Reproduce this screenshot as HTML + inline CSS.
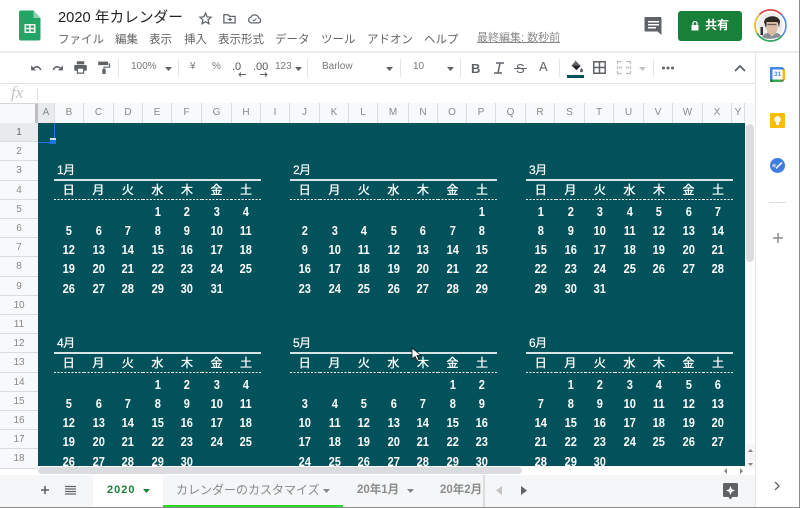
<!DOCTYPE html>
<html lang="ja"><head><meta charset="utf-8"><title>2020 年カレンダー</title>
<style>
html,body{margin:0;padding:0;background:#fff}
#p{position:relative;width:800px;height:508px;overflow:hidden;background:#fff;font-family:"Liberation Sans","Noto Sans CJK JP",sans-serif;color:#5f6368}
.a{position:absolute;white-space:nowrap}
svg{position:absolute;overflow:visible}
.m{top:32px;font-size:11.5px;color:#666;line-height:16px}
.t{top:60px;font-size:10px;color:#777;line-height:14px}
.ch{position:absolute;top:103px;height:20px;line-height:20px;font-size:10px;text-align:center;color:#888;background:#f8f9fa;border-right:1px solid #dadce0;box-sizing:border-box;overflow:hidden}
.rh{position:absolute;left:0;width:38px;text-align:center;font-size:10px;color:#888;background:#f8f9fa;border-bottom:1px solid #dadce0;box-sizing:border-box;line-height:19px;height:19.2px}
.v{position:absolute;width:1px;background:#e3e3e3;height:18px;top:59px}
#g{position:absolute;left:38px;top:123px;width:707px;height:343px;background:#02525c;overflow:hidden}
.c{position:absolute;width:207px;display:grid;grid-template-columns:repeat(7,29.55px);grid-auto-rows:19.2px;color:#fff;font-family:"Liberation Sans","Noto Sans CJK JP",sans-serif;font-weight:700;font-size:13px;text-align:center;line-height:19px}
.c b{font-family:"Liberation Sans","Noto Sans CJK JP",sans-serif;font-size:12px;grid-column:span 7;text-align:left;padding-left:3px;line-height:18px;font-weight:400;letter-spacing:-.5px;-webkit-text-stroke:.2px #fff}
.c u{text-decoration:none;font-size:12px;font-weight:400;line-height:18px;border-top:2px solid #d5e3e5;box-sizing:border-box;margin-top:-1px;height:21px;-webkit-text-stroke:.3px #fff;background:repeating-linear-gradient(90deg,#fff 0 2px,transparent 2px 3.5px) bottom/100% 1.5px no-repeat}
.c i{font-style:normal;display:block;position:relative;top:2.5px;transform:scaleX(.85)}
.tab{position:absolute;top:475px;height:32px;line-height:31px;font-size:12px;color:#888;white-space:nowrap}
</style></head><body><div id="p">

<!-- title bar -->
<svg style="left:19px;top:10px" width="22" height="31" viewBox="0 0 22 31"><path d="M2 .5h12.500L21.500 8v20.500a2 2 0 0 1-2 2H2a2 2 0 0 1-2-2v-26a2 2 0 0 1 2-2z" fill="#23a566"/><path d="M14.500.5 21.500 8h-7z" fill="#8ed1b1"/><path d="M5.500 14h11v9h-11zM7 15.500v2.200h3.200v-2.200zm4.800 0v2.200H15v-2.200zM7 19.300v2.200h3.200v-2.200zm4.800 0v2.200H15v-2.200z" fill="#f1f8f4" fill-rule="evenodd"/></svg>
<div class="a" style="left:58px;top:8px;font-size:14.700px;line-height:20px;color:#222">2020 年カレンダー</div>
<svg style="left:198px;top:11px" width="15" height="15" viewBox="0 0 24 24"><path d="M12 3.500l2.600 5.800 6.300.6-4.800 4.200 1.400 6.200L12 17.100l-5.500 3.200 1.400-6.200L3.100 9.900l6.300-.6z" fill="none" stroke="#5f6368" stroke-width="2"/></svg>
<svg style="left:222px;top:11px" width="15" height="15" viewBox="0 0 24 24"><path d="M3 6h7l2 2.500h9V19H3z" fill="none" stroke="#5f6368" stroke-width="2"/><path d="M9 13.500h5M12 11l3 2.500-3 2.500" fill="none" stroke="#5f6368" stroke-width="1.800"/></svg>
<svg style="left:247px;top:11px" width="15" height="15" viewBox="0 0 24 24"><path d="M7 19a4.500 4.500 0 0 1-.8-8.900 6.500 6.500 0 0 1 12.300 1A4 4 0 0 1 18 19z" fill="none" stroke="#5f6368" stroke-width="2"/><path d="M9 14l2 2 4-4" fill="none" stroke="#5f6368" stroke-width="1.500"/></svg>

<div class="a m" style="left:58px">ファイル</div>
<div class="a m" style="left:115px">編集</div>
<div class="a m" style="left:149px">表示</div>
<div class="a m" style="left:184px">挿入</div>
<div class="a m" style="left:218px">表示形式</div>
<div class="a m" style="left:275px">データ</div>
<div class="a m" style="left:321px">ツール</div>
<div class="a m" style="left:367px">アドオン</div>
<div class="a m" style="left:424px">ヘルプ</div>
<div class="a" style="left:477px;top:30px;font-size:11px;line-height:16px;color:#888;text-decoration:underline">最終編集: 数秒前</div>

<svg style="left:644px;top:16px" width="19" height="19" viewBox="0 0 19 19"><path d="M1.500 1h15a1 1 0 0 1 1 1v12.500V19l-4-3.500h-12a1 1 0 0 1-1-1V2a1 1 0 0 1 1-1z" fill="#5f6368"/><path d="M4 5h11v1.500H4zM4 8h11v1.500H4zM4 11h8v1.500H4z" fill="#fff"/></svg>
<div class="a" style="left:678px;top:11px;width:64px;height:30px;background:#188038;border-radius:3px"></div>
<svg style="left:689px;top:20px" width="12" height="12" viewBox="0 0 12 12"><path d="M2.500 5h7v5.500h-7z" fill="#fff"/><path d="M4 5V3.500a2 2 0 0 1 4 0V5" fill="none" stroke="#fff" stroke-width="1.300"/></svg>
<div class="a" style="left:705px;top:17px;font-size:12px;line-height:17px;color:#fff;font-weight:700">共有</div>

<svg style="left:754px;top:9px" width="33" height="33" viewBox="0 0 33 33">
<circle cx="16.500" cy="16.500" r="15.500" fill="none" stroke="#4285f4" stroke-width="1.500"/>
<path d="M5.500 5.500A15.500 15.500 0 0 1 27.500 5.500" fill="none" stroke="#ea4335" stroke-width="1.500"/>
<path d="M5.500 5.500A15.500 15.500 0 0 0 3 24" fill="none" stroke="#fbbc05" stroke-width="1.500"/>
<path d="M3 24A15.500 15.500 0 0 0 28 27" fill="none" stroke="#34a853" stroke-width="1.500"/>
<circle cx="16.500" cy="16.500" r="13" fill="#efeeec"/>
<path d="M10 13c1-7 14-8 16-1l-1 7-1-5H13l-1 5z" fill="#2b2826"/>
<path d="M12.500 13h11v7c-1 4-3 6-5.500 6s-5-2-5.500-6z" fill="#dcbba6"/>
<path d="M13.500 15.500h9" stroke="#6b5a50" stroke-width="1.200"/>
<path d="M8 28c2-3 4-4 6-4l4 3 4-3c2 0 4 1 5 3-5 3-14 4-19 1z" fill="#8a8d91"/>
<path d="M6.500 18h2.500v8H6.500z" fill="#333"/>
</svg>

<!-- toolbar -->
<div class="a" style="left:0;top:50.500px;width:800px;height:2px;background:#ececec"></div>
<div class="a" style="left:755px;top:52px;width:1px;height:456px;background:#e6e6e6"></div>
<div class="a" style="left:0;top:83px;width:755px;height:1px;background:#e3e3e3"></div>
<div class="a" style="left:0;top:103px;width:755px;height:1px;background:#d5d5d5"></div>

<svg style="left:28px;top:61px" width="15" height="15" viewBox="0 0 24 24"><path d="M5 7v8h8l-3-3c3.500-2.500 7.500-1.500 9.500 3l2-1C19 7.500 13 6 8.500 10.500z" fill="#5f6368"/></svg>
<svg style="left:51px;top:61px" width="15" height="15" viewBox="0 0 24 24"><path d="M19 7v8h-8l3-3c-3.500-2.500-7.500-1.500-9.500 3l-2-1C5 7.500 11 6 15.500 10.500z" fill="#5f6368"/></svg>
<svg style="left:73px;top:60px" width="15" height="15" viewBox="0 0 24 24"><path d="M6 2h12v5H6zM3 8h18a1 1 0 0 1 1 1v8h-4v5H6v-5H2V9a1 1 0 0 1 1-1zm5 6v6h8v-6z" fill="#5f6368" fill-rule="evenodd"/></svg>
<svg style="left:97px;top:60px" width="14" height="15" viewBox="0 0 24 24"><path d="M2 2h17v6H2zM20 5h2.500v7.500H13V15h2v8H9v-8h2v-4.500h9.500z" fill="#5f6368"/></svg>
<div class="v" style="left:118px"></div>
<div class="a t" style="left:131px">100%</div>
<svg style="left:165px;top:67px" width="7" height="4"><path d="M0 0h7L3.500 4z" fill="#5f6368"/></svg>
<div class="v" style="left:178px"></div>
<div class="a t" style="left:190px">¥</div>
<div class="a t" style="left:212px">%</div>
<div class="a t" style="left:232px;font-size:11px;color:#555">.0</div>
<svg style="left:238px;top:72px" width="8" height="5"><path d="M8 2.500H1M3 .5 1 2.500l2 2" fill="none" stroke="#5f6368"/></svg>
<div class="a t" style="left:253px;font-size:11px;color:#555">.00</div>
<svg style="left:260px;top:72px" width="9" height="5"><path d="M0 2.500h7M5 .5l2 2-2 2" fill="none" stroke="#5f6368"/></svg>
<div class="a t" style="left:275px">123</div>
<svg style="left:295px;top:67px" width="7" height="4"><path d="M0 0h7L3.500 4z" fill="#5f6368"/></svg>
<div class="v" style="left:307px"></div>
<div class="a t" style="left:322px">Barlow</div>
<svg style="left:386px;top:67px" width="7" height="4"><path d="M0 0h7L3.500 4z" fill="#5f6368"/></svg>
<div class="v" style="left:400px"></div>
<div class="a t" style="left:413px">10</div>
<svg style="left:447px;top:67px" width="7" height="4"><path d="M0 0h7L3.500 4z" fill="#5f6368"/></svg>
<div class="v" style="left:460px"></div>
<div class="a" style="left:471px;top:60px;font-size:13px;line-height:17px;font-weight:700;color:#5f6368">B</div>
<svg style="left:493px;top:62px" width="12" height="12" viewBox="0 0 12 12"><path d="M3 1h8M1 11h8M7 1 5 11" fill="none" stroke="#5f6368" stroke-width="1.500"/></svg>
<div class="a" style="left:516px;top:60px;font-size:13px;line-height:17px;color:#5f6368">S</div>
<div class="a" style="left:514px;top:68px;width:13px;height:1px;background:#5f6368"></div>
<div class="a" style="left:539px;top:58px;font-size:13px;line-height:17px;color:#5f6368">A</div>
<div class="v" style="left:559px"></div>
<svg style="left:569px;top:59px" width="15" height="14" viewBox="0 0 24 22"><path d="M9 1l10 10-7 7-8-8 6-6zM20 14c1.500 2 2.500 3 2.500 4.500a2.500 2.500 0 0 1-5 0c0-1.500 1-2.500 2.500-4.500z" fill="#5f6368"/><path d="M4.500 10.500H18L12 17z" fill="#222"/></svg>
<div class="a" style="left:567px;top:75px;width:17px;height:3px;background:#02525c"></div>
<svg style="left:593px;top:61px" width="13" height="13" viewBox="0 0 13 13"><path d="M.8.800h11.400v11.400H.800zM6.500.8v11.400M.8 6.500h11.400" fill="none" stroke="#5f6368" stroke-width="1.500"/></svg>
<svg style="left:617px;top:61px" width="14" height="13" viewBox="0 0 14 13"><path d="M.5 3V.5h4M9 .5h4.500V3M.5 10v2.500h4M9 12.500h4.500V10M.5 5v3M13.500 5v3M2 6.500h3.500M8.500 6.500H12" fill="none" stroke="#bdbdbd" stroke-width="1.200"/></svg>
<svg style="left:639px;top:67px" width="7" height="4"><path d="M0 0h7L3.500 4z" fill="#c4c4c4"/></svg>
<div class="v" style="left:653px"></div>
<svg style="left:662px;top:66px" width="12" height="4"><circle cx="1.500" cy="2" r="1.500" fill="#5f6368"/><circle cx="6" cy="2" r="1.500" fill="#5f6368"/><circle cx="10.500" cy="2" r="1.500" fill="#5f6368"/></svg>
<svg style="left:734px;top:65px" width="12" height="7"><path d="M1 6l5-5 5 5" fill="none" stroke="#5f6368" stroke-width="1.800"/></svg>

<!-- formula bar -->
<div class="a" style="left:11px;top:84px;font-family:'Liberation Serif',serif;font-style:italic;font-size:17px;line-height:18px;color:#c4c4c4">fx</div>
<div class="a" style="left:37px;top:88px;width:1px;height:12px;background:#dadce0"></div>

<!-- column headers -->
<div class="a" style="left:0;top:104px;width:35px;height:19px;background:#f8f9fa"></div>
<div class="a" style="left:35px;top:104px;width:3px;height:19px;background:#bdbdbd"></div>
<div class="ch" style="left:38px;width:17px;background:#e8eaed">A</div>
<div class="ch" style="left:55px;width:29px">B</div>
<div class="ch" style="left:84px;width:30px">C</div>
<div class="ch" style="left:114px;width:29px">D</div>
<div class="ch" style="left:143px;width:29px">E</div>
<div class="ch" style="left:172px;width:30px">F</div>
<div class="ch" style="left:202px;width:30px">G</div>
<div class="ch" style="left:232px;width:29px">H</div>
<div class="ch" style="left:261px;width:29px">I</div>
<div class="ch" style="left:290px;width:30px">J</div>
<div class="ch" style="left:320px;width:29px">K</div>
<div class="ch" style="left:349px;width:29px">L</div>
<div class="ch" style="left:378px;width:31px">M</div>
<div class="ch" style="left:409px;width:29px">N</div>
<div class="ch" style="left:438px;width:29px">O</div>
<div class="ch" style="left:467px;width:29px">P</div>
<div class="ch" style="left:496px;width:30px">Q</div>
<div class="ch" style="left:526px;width:29px">R</div>
<div class="ch" style="left:555px;width:30px">S</div>
<div class="ch" style="left:585px;width:29px">T</div>
<div class="ch" style="left:614px;width:30px">U</div>
<div class="ch" style="left:644px;width:29px">V</div>
<div class="ch" style="left:673px;width:30px">W</div>
<div class="ch" style="left:703px;width:29px">X</div>
<div class="ch" style="left:732px;width:13px">Y</div>
<div class="ch" style="left:745px;width:10px;border-right:0"></div>

<!-- row headers -->
<div class="rh" style="top:123px;background:#e8eaed;color:#666">1</div>
<div class="rh" style="top:142.200px">2</div>
<div class="rh" style="top:161.400px">3</div>
<div class="rh" style="top:180.600px">4</div>
<div class="rh" style="top:199.800px">5</div>
<div class="rh" style="top:219px">6</div>
<div class="rh" style="top:238.200px">7</div>
<div class="rh" style="top:257.400px">8</div>
<div class="rh" style="top:276.600px">9</div>
<div class="rh" style="top:295.800px">10</div>
<div class="rh" style="top:315px">11</div>
<div class="rh" style="top:334.200px">12</div>
<div class="rh" style="top:353.400px">13</div>
<div class="rh" style="top:372.600px">14</div>
<div class="rh" style="top:391.800px">15</div>
<div class="rh" style="top:411px">16</div>
<div class="rh" style="top:430.200px">17</div>
<div class="rh" style="top:449.400px">18</div>

<!-- grid -->
<div id="g">
<div class="c" style="left:16px;top:38px"><b>1月</b><u>日</u><u>月</u><u>火</u><u>水</u><u>木</u><u>金</u><u>土</u>
<i></i><i></i><i></i><i>1</i><i>2</i><i>3</i><i>4</i><i>5</i><i>6</i><i>7</i><i>8</i><i>9</i><i>10</i><i>11</i><i>12</i><i>13</i><i>14</i><i>15</i><i>16</i><i>17</i><i>18</i><i>19</i><i>20</i><i>21</i><i>22</i><i>23</i><i>24</i><i>25</i><i>26</i><i>27</i><i>28</i><i>29</i><i>30</i><i>31</i><i></i></div>
<div class="c" style="left:252px;top:38px"><b>2月</b><u>日</u><u>月</u><u>火</u><u>水</u><u>木</u><u>金</u><u>土</u>
<i></i><i></i><i></i><i></i><i></i><i></i><i>1</i><i>2</i><i>3</i><i>4</i><i>5</i><i>6</i><i>7</i><i>8</i><i>9</i><i>10</i><i>11</i><i>12</i><i>13</i><i>14</i><i>15</i><i>16</i><i>17</i><i>18</i><i>19</i><i>20</i><i>21</i><i>22</i><i>23</i><i>24</i><i>25</i><i>26</i><i>27</i><i>28</i><i>29</i></div>
<div class="c" style="left:488px;top:38px"><b>3月</b><u>日</u><u>月</u><u>火</u><u>水</u><u>木</u><u>金</u><u>土</u>
<i>1</i><i>2</i><i>3</i><i>4</i><i>5</i><i>6</i><i>7</i><i>8</i><i>9</i><i>10</i><i>11</i><i>12</i><i>13</i><i>14</i><i>15</i><i>16</i><i>17</i><i>18</i><i>19</i><i>20</i><i>21</i><i>22</i><i>23</i><i>24</i><i>25</i><i>26</i><i>27</i><i>28</i><i>29</i><i>30</i><i>31</i><i></i><i></i><i></i><i></i></div>
<div class="c" style="left:16px;top:211px"><b>4月</b><u>日</u><u>月</u><u>火</u><u>水</u><u>木</u><u>金</u><u>土</u>
<i></i><i></i><i></i><i>1</i><i>2</i><i>3</i><i>4</i><i>5</i><i>6</i><i>7</i><i>8</i><i>9</i><i>10</i><i>11</i><i>12</i><i>13</i><i>14</i><i>15</i><i>16</i><i>17</i><i>18</i><i>19</i><i>20</i><i>21</i><i>22</i><i>23</i><i>24</i><i>25</i><i>26</i><i>27</i><i>28</i><i>29</i><i>30</i></div>
<div class="c" style="left:252px;top:211px"><b>5月</b><u>日</u><u>月</u><u>火</u><u>水</u><u>木</u><u>金</u><u>土</u>
<i></i><i></i><i></i><i></i><i></i><i>1</i><i>2</i><i>3</i><i>4</i><i>5</i><i>6</i><i>7</i><i>8</i><i>9</i><i>10</i><i>11</i><i>12</i><i>13</i><i>14</i><i>15</i><i>16</i><i>17</i><i>18</i><i>19</i><i>20</i><i>21</i><i>22</i><i>23</i><i>24</i><i>25</i><i>26</i><i>27</i><i>28</i><i>29</i><i>30</i></div>
<div class="c" style="left:488px;top:211px"><b>6月</b><u>日</u><u>月</u><u>火</u><u>水</u><u>木</u><u>金</u><u>土</u>
<i></i><i>1</i><i>2</i><i>3</i><i>4</i><i>5</i><i>6</i><i>7</i><i>8</i><i>9</i><i>10</i><i>11</i><i>12</i><i>13</i><i>14</i><i>15</i><i>16</i><i>17</i><i>18</i><i>19</i><i>20</i><i>21</i><i>22</i><i>23</i><i>24</i><i>25</i><i>26</i><i>27</i><i>28</i><i>29</i><i>30</i></div>
<div style="position:absolute;left:0;top:-1px;width:16px;height:19px;border:1px solid #1a73e8;border-width:1px 1.500px 1.500px 0"></div>
<div style="position:absolute;left:12px;top:15px;width:6px;height:4px;background:#1a73e8;border-top:2px solid #cfe0f7"></div>
</div>
<svg style="left:411px;top:347px" width="11" height="15" viewBox="0 0 11 15"><path d="M1 1v11l3-2.500 2 4 2-1-2-4h4z" fill="#fff" stroke="#111" stroke-width=".8"/></svg>

<!-- scrollbars -->
<div class="a" style="left:745px;top:123px;width:10px;height:352px;background:#fff"></div>
<div class="a" style="left:746px;top:124px;width:8px;height:138px;background:#dadce0;border-radius:4px"></div>
<div class="a" style="left:746px;top:444px;width:9px;height:12px;background:#f5f5f5"></div>
<div class="a" style="left:746px;top:456px;width:9px;height:12px;background:#f5f5f5"></div>
<svg style="left:748px;top:448px" width="5" height="20"><path d="M0 4 2.500 1 5 4zM0 15l2.500 3L5 15z" fill="#888"/></svg>
<div class="a" style="left:38px;top:467px;width:484px;height:7px;background:#dadce0;border-radius:4px"></div>
<svg style="left:724px;top:468px" width="20" height="6"><path d="M3 0 0 3l3 3zM16 0l3 3-3 3z" fill="#888"/></svg>

<!-- tabs -->
<div class="a" style="left:0;top:475px;width:755px;height:32px;background:#f5f6f7"></div>
<div class="a" style="left:0;top:507px;width:800px;height:1px;background:#8a8a8a"></div>
<div class="a" style="left:799px;top:0;width:1px;height:508px;background:#8a8a8a"></div>
<svg style="left:40px;top:485px" width="10" height="10"><path d="M5 1v8M1 5h8" stroke="#5f6368" stroke-width="1.600"/></svg>
<svg style="left:65px;top:485px" width="11" height="11"><path d="M0 1.500h11M0 4h11M0 6.500h11M0 9h11" stroke="#5f6368" stroke-width="1.200"/></svg>
<div class="tab" style="left:93px;width:70px;background:#fff;color:#188038;font-weight:700;font-size:11px;letter-spacing:1px;padding-left:14px;box-sizing:border-box">2020</div>
<svg style="left:143px;top:489px" width="7" height="4"><path d="M0 0h7L3.500 4z" fill="#188038"/></svg>
<div class="tab" style="left:163px;width:180px;padding-left:13px;box-sizing:border-box">カレンダーのカスタマイズ</div>
<svg style="left:323px;top:489px" width="7" height="4"><path d="M0 0h7L3.500 4z" fill="#80868b"/></svg>
<div class="a" style="left:163px;top:505px;width:180px;height:2px;background:#2bd92b"></div>
<div class="tab" style="left:357px;font-weight:700;color:#8c8c8c;font-size:11.500px">20年1月</div>
<div class="tab" style="left:440px;width:43px;overflow:hidden;font-weight:700;color:#8c8c8c;font-size:11.500px">20年2月</div>
<svg style="left:407px;top:489px" width="7" height="4"><path d="M0 0h7L3.500 4z" fill="#80868b"/></svg>
<div class="a" style="left:483px;top:475px;width:2px;height:32px;background:#dcdcdc"></div>
<svg style="left:496px;top:486px" width="7" height="9"><path d="M6 0v9L0 4.500z" fill="#c4c4c4"/></svg>
<svg style="left:521px;top:486px" width="7" height="9"><path d="M0 0v9l6-4.500z" fill="#5f6368"/></svg>
<svg style="left:723px;top:483px" width="15" height="17" viewBox="0 0 15 17"><path d="M1.500 0h12A1.500 1.500 0 0 1 15 1.500v11a1.500 1.500 0 0 1-1.500 1.500h-4L7.500 16.500 5.500 14h-4A1.500 1.500 0 0 1 0 12.500v-11A1.500 1.500 0 0 1 1.500 0z" fill="#5f6368"/><path d="M7.500 3l1.300 3.200L12 7.500 8.800 8.800 7.500 12 6.200 8.800 3 7.500l3.200-1.300z" fill="#fff"/></svg>

<!-- side panel -->
<svg style="left:770px;top:67px" width="15" height="15" viewBox="0 0 15 15"><path d="M0 0h15v15H0z" fill="#fff"/><path d="M0 0h12v2.500H2.500V12.500H0z" fill="#4285f4"/><path d="M12 0l3 2.500h-3z" fill="#1967d2"/><path d="M12.500 2.500H15v10h-2.500z" fill="#fbbc04"/><path d="M2.500 12.500h10V15h-10z" fill="#34a853"/><path d="M0 12.500h2.500V15H1a1 1 0 0 1-1-1z" fill="#188038"/><path d="M12.500 12.500H15L12.500 15z" fill="#ea4335"/></svg>
<div class="a" style="left:774px;top:71px;font-size:6.500px;line-height:8px;color:#4285f4;font-weight:700">31</div>
<svg style="left:770px;top:113px" width="15" height="15" viewBox="0 0 15 15"><rect width="15" height="15" rx="1.500" fill="#fbbc04"/><circle cx="7.500" cy="6.300" r="3.200" fill="#fff"/><path d="M6 9.500h3v2.500H6z" fill="#fff"/></svg>
<svg style="left:770px;top:158px" width="15" height="15" viewBox="0 0 15 15"><circle cx="7.500" cy="7.500" r="7.500" fill="#3f7de0"/><path d="M5.500 9.500 11.500 4l1 1-6 6z" fill="#fff"/><circle cx="4" cy="7.500" r="1.800" fill="#b9c6d9"/></svg>
<div class="a" style="left:769px;top:202px;width:17px;height:1px;background:#dadce0"></div>
<svg style="left:773px;top:233px" width="10" height="10"><path d="M5 0v10M0 5h10" stroke="#777" stroke-width="1.200"/></svg>
<svg style="left:774px;top:481px" width="7" height="10"><path d="M1 1l4 4-4 4" fill="none" stroke="#5f6368" stroke-width="1.300"/></svg>
</div></body></html>
